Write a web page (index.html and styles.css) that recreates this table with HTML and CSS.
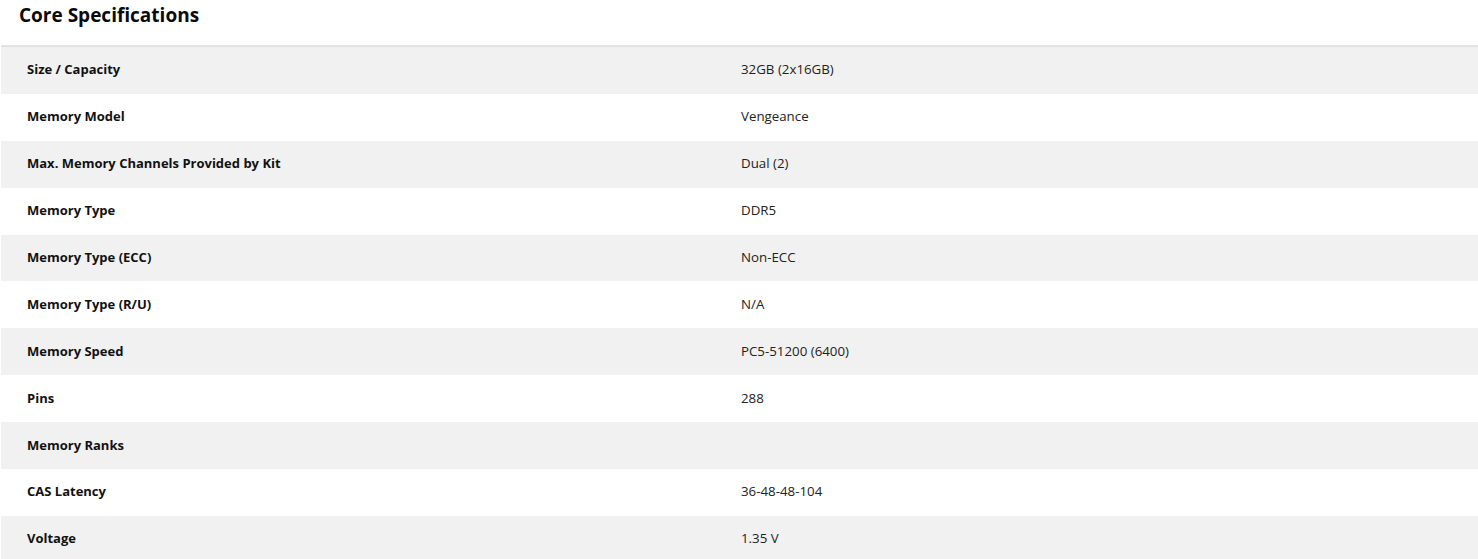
FILE: index.html
```html
<!DOCTYPE html>
<html lang="en">
<head>
<meta charset="utf-8">
<title>Core Specifications</title>
<link rel="stylesheet" href="styles.css">
</head>
<body>
<section class="specs">
  <h2 class="specs-title">Core Specifications</h2>
  <div class="specs-table">
    <div class="row"><div class="label">Size / Capacity</div><div class="value">32GB (2x16GB)</div></div>
    <div class="row"><div class="label">Memory Model</div><div class="value">Vengeance</div></div>
    <div class="row"><div class="label">Max. Memory Channels Provided by Kit</div><div class="value">Dual (2)</div></div>
    <div class="row"><div class="label">Memory Type</div><div class="value">DDR5</div></div>
    <div class="row"><div class="label">Memory Type (ECC)</div><div class="value">Non-ECC</div></div>
    <div class="row"><div class="label">Memory Type (R/U)</div><div class="value">N/A</div></div>
    <div class="row"><div class="label">Memory Speed</div><div class="value">PC5-51200 (6400)</div></div>
    <div class="row"><div class="label">Pins</div><div class="value">288</div></div>
    <div class="row"><div class="label">Memory Ranks</div><div class="value"></div></div>
    <div class="row"><div class="label">CAS Latency</div><div class="value">36-48-48-104</div></div>
    <div class="row"><div class="label">Voltage</div><div class="value">1.35 V</div></div>
  </div>
</section>
</body>
</html>
```

FILE: styles.css
```css
html, body {
  margin: 0;
  padding: 0;
  background: #ffffff;
}
body {
  font-family: "Open Sans", "Liberation Sans", sans-serif;
  color: #111111;
}
.specs-title {
  margin: 0;
  padding: 3px 0 0 19px;
  height: 45px;
  box-sizing: border-box;
  font-size: 19px;
  font-weight: 700;
  line-height: 24px;
  color: #0a0a0a;
}
.specs-table {
  margin-left: 1px;
  border-top: 2px solid #e2e2e2;
}
.row {
  display: grid;
  grid-template-columns: 740px 1fr;
  height: 46.9px;
  box-sizing: border-box;
  padding-bottom: 2px;
  align-items: center;
  font-size: 13px;
  line-height: 18px;
}
.row:nth-child(odd) {
  background: #f1f1f1;
}
.label {
  padding-left: 26px;
  font-weight: 700;
  color: #111111;
}
.value {
  font-weight: 400;
  font-size: 13.3px;
  color: #222222;
}
```
